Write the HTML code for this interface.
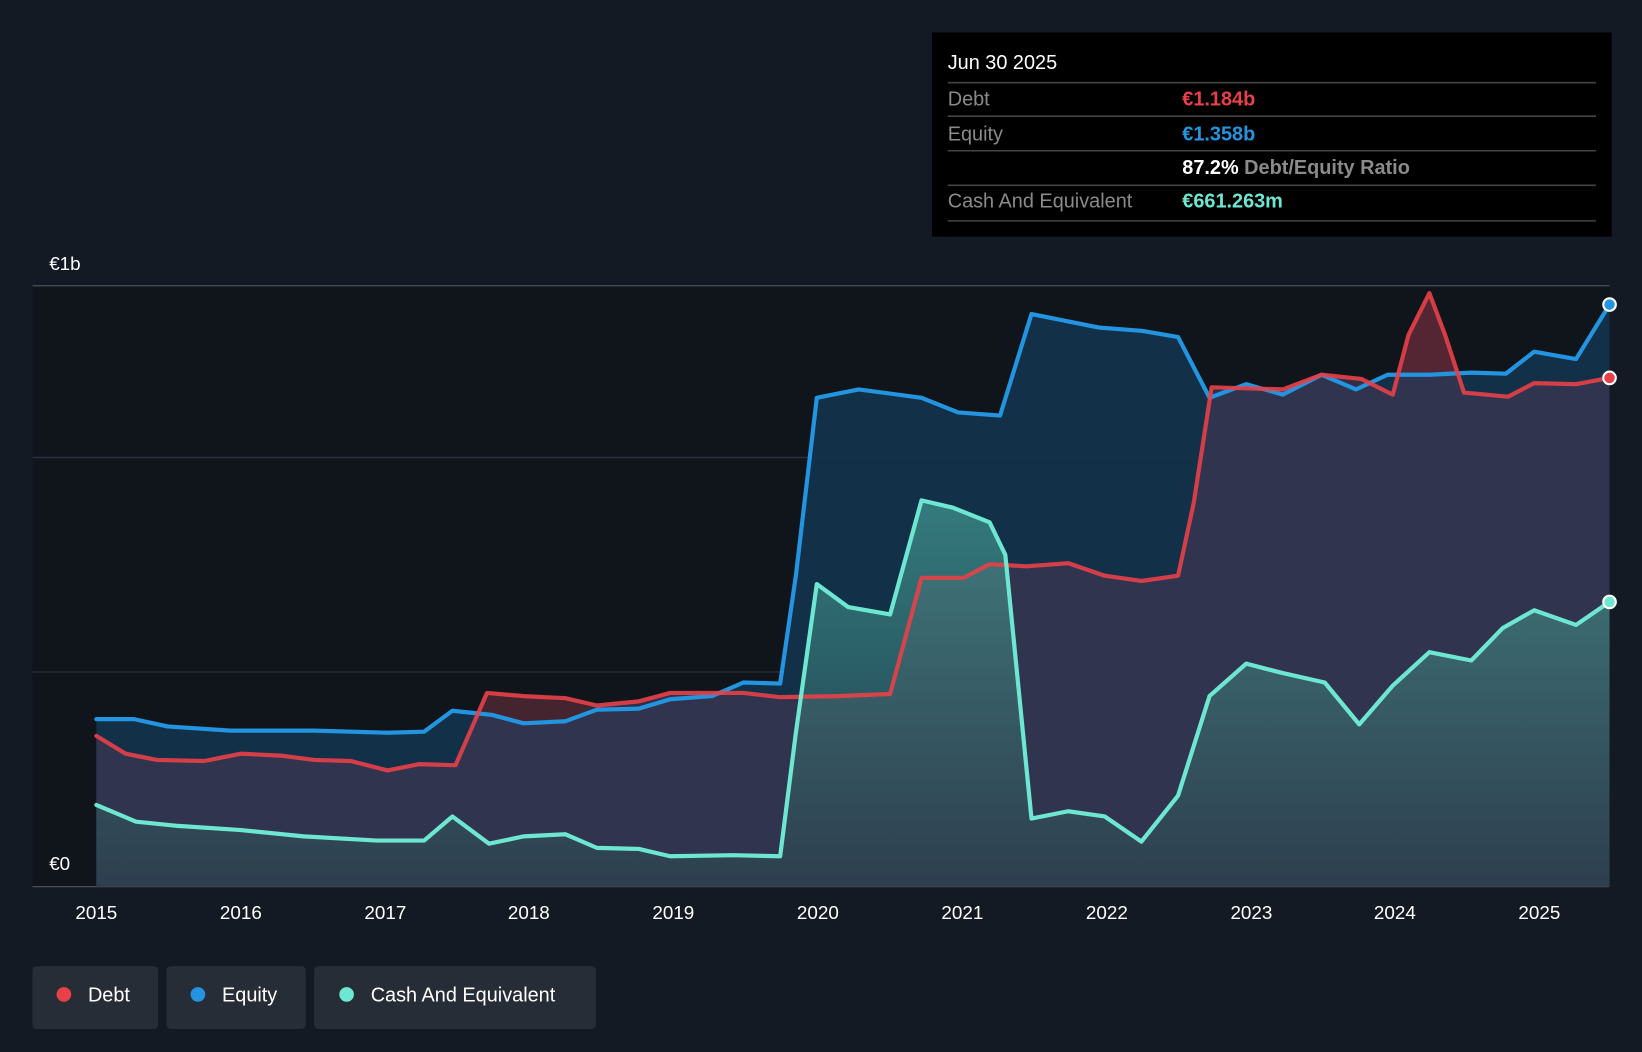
<!DOCTYPE html>
<html><head><meta charset="utf-8"><style>
html,body{margin:0;padding:0;background:#131a23;}
svg{display:block;font-family:"Liberation Sans",sans-serif;}
</style></head><body>
<svg width="1642" height="1052" viewBox="0 0 1568 1005" preserveAspectRatio="none" xmlns="http://www.w3.org/2000/svg">
<defs>
<linearGradient id="cg" x1="0" y1="0" x2="0" y2="1"><stop offset="0" stop-color="#4fb8a8" stop-opacity="0.55"/><stop offset="1" stop-color="#2a4a4e" stop-opacity="0.5"/></linearGradient>
</defs>
<rect width="1568" height="1005" fill="#131a23"/>
<rect x="31" y="273" width="1506" height="574" fill="#10151c"/>
<g stroke="#2c323b" stroke-width="1.2">
<line x1="31" y1="273" x2="1537" y2="273" stroke="#4a5059"/>
<line x1="31" y1="437" x2="1537" y2="437"/>
<line x1="31" y1="642" x2="1537" y2="642"/>
<line x1="31" y1="847" x2="1537" y2="847" stroke="#4a5059"/>
</g>
<text x="47" y="258" fill="#fff" font-size="18">€1b</text>
<text x="47" y="831" fill="#fff" font-size="18">€0</text>
<g fill="#fff" font-size="18" text-anchor="middle">
<text x="92" y="878">2015</text><text x="230" y="878">2016</text><text x="368" y="878">2017</text><text x="505" y="878">2018</text><text x="643" y="878">2019</text><text x="781" y="878">2020</text><text x="919" y="878">2021</text><text x="1057" y="878">2022</text><text x="1195" y="878">2023</text><text x="1332" y="878">2024</text><text x="1470" y="878">2025</text>
</g>
<polygon fill="#14324c" fill-opacity="0.95" points="92,847 92,687 128,687 160,694 220,698 300,698 370,700 405,699 432,679 470,683 500,691 540,689 570,678 610,677 640,668 680,665 710,652 745,653 760,550 780,380 820,372 880,380 915,394 955,397 985,300 1050,313 1090,316 1125,322 1155,380 1190,367 1225,377 1262,358 1295,372 1325,358 1365,358 1405,356 1438,357 1465,336 1505,343 1537,291 1537,847"/>
<polygon fill="#3a3650" fill-opacity="0.8" points="92,847 92,703 120,720 150,726 195,727 230,720 270,722 300,726 335,727 370,736 400,730 435,731 465,662 500,665 540,667 570,674 610,670 640,662 710,662 745,666 800,665 850,663 880,552 920,552 945,539 980,541 1020,538 1055,550 1090,555 1125,550 1140,480 1157,370 1225,372 1262,358 1300,362 1330,377 1345,320 1365,280 1380,320 1398,375 1440,379 1465,366 1505,367 1537,361 1537,847"/>
<polygon fill="#5a2530" fill-opacity="0.85" points="1338,358 1345,320 1365,280 1380,320 1392,358"/>
<polygon fill="#4a2228" fill-opacity="0.8" points="458,680 465,662 500,665 540,667 565,675 540,689 500,691 470,683"/>
<polygon fill="url(#cg)" points="92,847 92,769 130,785 170,789 230,793 290,799 360,803 405,803 432,780 467,806 500,799 540,797 570,810 610,811 640,818 700,817 745,818 760,700 780,558 810,580 850,587 880,478 910,485 945,499 960,530 985,782 1020,775 1055,780 1090,804 1125,760 1155,665 1190,634 1225,643 1265,652 1298,692 1330,655 1365,623 1405,631 1435,600 1465,583 1505,597 1537,575 1537,847"/>
<g fill="none" stroke-width="4" stroke-linejoin="round" stroke-linecap="round">
<polyline stroke="#2394df" points="92,687 128,687 160,694 220,698 300,698 370,700 405,699 432,679 470,683 500,691 540,689 570,678 610,677 640,668 680,665 710,652 745,653 760,550 780,380 820,372 880,380 915,394 955,397 985,300 1050,313 1090,316 1125,322 1155,380 1190,367 1225,377 1262,358 1295,372 1325,358 1365,358 1405,356 1438,357 1465,336 1505,343 1537,291"/>
<polyline stroke="#e84048" stroke-opacity="0.9" points="92,703 120,720 150,726 195,727 230,720 270,722 300,726 335,727 370,736 400,730 435,731 465,662 500,665 540,667 570,674 610,670 640,662 710,662 745,666 800,665 850,663 880,552 920,552 945,539 980,541 1020,538 1055,550 1090,555 1125,550 1140,480 1157,370 1225,372 1262,358 1300,362 1330,377 1345,320 1365,280 1380,320 1398,375 1440,379 1465,366 1505,367 1537,361"/>
<polyline stroke="#6ee7d2" points="92,769 130,785 170,789 230,793 290,799 360,803 405,803 432,780 467,806 500,799 540,797 570,810 610,811 640,818 700,817 745,818 760,700 780,558 810,580 850,587 880,478 910,485 945,499 960,530 985,782 1020,775 1055,780 1090,804 1125,760 1155,665 1190,634 1225,643 1265,652 1298,692 1330,655 1365,623 1405,631 1435,600 1465,583 1505,597 1537,575"/>
</g>
<circle cx="1537" cy="291" r="6" fill="#2394df" stroke="#fff" stroke-width="2"/>
<circle cx="1537" cy="361" r="6" fill="#e84048" stroke="#fff" stroke-width="2"/>
<circle cx="1537" cy="575" r="6" fill="#6ee7d2" stroke="#fff" stroke-width="2"/>
<rect x="890" y="31" width="649" height="195" fill="#000"/>
<g stroke="#444" stroke-width="1.5">
<line x1="905" y1="79" x2="1524" y2="79"/><line x1="905" y1="111" x2="1524" y2="111"/><line x1="905" y1="144" x2="1524" y2="144"/><line x1="905" y1="177" x2="1524" y2="177"/><line x1="905" y1="211" x2="1524" y2="211"/>
</g>
<g font-size="19">
<text x="905" y="66" fill="#fff">Jun 30 2025</text>
<text x="905" y="101" fill="#8a8a8a">Debt</text><text x="1129" y="101" fill="#e84048" font-weight="bold">€1.184b</text>
<text x="905" y="134" fill="#8a8a8a">Equity</text><text x="1129" y="134" fill="#2394df" font-weight="bold">€1.358b</text>
<text x="1129" y="166" fill="#fff" font-weight="bold">87.2% <tspan fill="#8a8a8a" font-weight="bold">Debt/Equity Ratio</tspan></text>
<text x="905" y="198" fill="#8a8a8a">Cash And Equivalent</text><text x="1129" y="198" fill="#6ee7d2" font-weight="bold">€661.263m</text>
</g>
<rect x="31" y="923" width="120" height="60" rx="4" fill="#272d36"/>
<rect x="159" y="923" width="133" height="60" rx="4" fill="#272d36"/>
<rect x="300" y="923" width="269" height="60" rx="4" fill="#272d36"/>
<circle cx="61" cy="950" r="7" fill="#e84048"/><circle cx="189" cy="950" r="7" fill="#2394df"/><circle cx="331" cy="950" r="7" fill="#6ee7d2"/>
<g fill="#fff" font-size="19"><text x="84" y="957">Debt</text><text x="212" y="957">Equity</text><text x="354" y="957">Cash And Equivalent</text></g>
</svg>
</body></html>
